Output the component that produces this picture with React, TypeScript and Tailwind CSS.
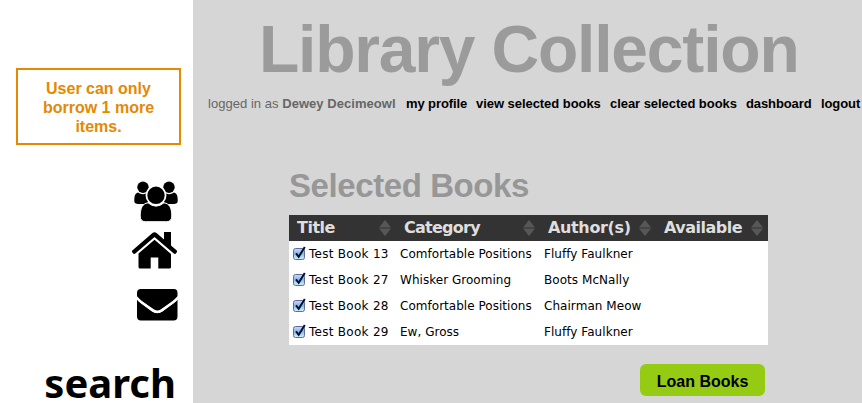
const sans = "font-['Liberation_Sans',Arial,sans-serif]";
const verdana = "font-['DejaVu_Sans',Verdana,sans-serif]";

const books = [
  { title: 'Test Book 13', category: 'Comfortable Positions', author: 'Fluffy Faulkner' },
  { title: 'Test Book 27', category: 'Whisker Grooming', author: 'Boots McNally' },
  { title: 'Test Book 28', category: 'Comfortable Positions', author: 'Chairman Meow' },
  { title: 'Test Book 29', category: 'Ew, Gross', author: 'Fluffy Faulkner' },
];

const columns = 'grid grid-cols-[107px_144px_116px_112px]';

function UsersIcon() {
  return (
    <svg className="block h-[41px] w-[44px]" viewBox="0 0 44 41">
      <circle cx="9" cy="6.2" r="5.7" />
      <circle cx="35" cy="6.2" r="5.7" />
      <path d="M4 11.5C1.5 12 .5 14 .3 18v2.5C.3 22 2 23 4 23h7l5-3-4-7.5Q8 14.5 4 11.5ZM40 11.5c2.500.5 3.500 2.500 3.700 6.500v2.500C43.700 22 42 23 40 23h-7l-5-3 4-7.500Q36 14.500 40 11.500Z" />
      <circle cx="22" cy="14.300" r="9.600" fill="#000" stroke="#fff" strokeWidth="1.800" />
      <path d="M14 21.800C8.500 22.500 6.300 27 6.200 35c0 3.800 2 5.700 5.300 5.700h21c3.300 0 5.300-1.900 5.300-5.700-.1-8-2.300-12.500-7.800-13.200Q22 28.500 14 21.800Z" stroke="#fff" strokeWidth="1" />
    </svg>
  );
}

function HomeIcon() {
  return (
    <svg className="block h-[37px] w-[46px]" viewBox="0 0 46 37">
      <path d="M20.200 1.200q2.300-2 4.600 0L32 7.500V0h7v13.500l5.500 4.700q1.200 1 .2 2.200l-.9 1q-.9 1-2 .1L22.500 5 3.300 21.500q-1.100.9-2-.1l-.9-1q-1-1.200.2-2.200Z" />
      <path d="M22.500 7.800 39 22v13q0 1.500-1.500 1.500H26.300V25.600h-7.600v10.900H8Q6.500 36.500 6.500 35V21.500Z" />
    </svg>
  );
}

function MailIcon() {
  return (
    <svg className="block h-[32px] w-[41px]" viewBox="0 0 41 32">
      <path d="M4 0h33q3.500 0 3.500 4v3q-1 2.500-4 4.700L24 20.500q-3.500 2.300-7 0L4 11.700Q1 9.500 0 7V4Q0 0 4 0Z" />
      <path d="M0 10.500q1 1.500 4 3.800L15 22.500q5.250 3.500 10.500 0L36.500 14.300q3-2.300 4-3.800v17q0 4-4 4H4q-4 0-4-4Z" />
      <path d="M0 9q2 2.500 4.500 4.200L16 21.500q4.250 2.800 8.500 0L36 13.200Q38.500 11.500 40.500 9" fill="none" stroke="#fff" strokeWidth="2.400" />
    </svg>
  );
}

function SortIcon() {
  return (
    <svg className="h-4 w-3" viewBox="0 0 12 16">
      <path d="M0 7.500 6 0l6 7.500ZM0 8.500 6 16l6-7.500Z" fill="#575757" />
    </svg>
  );
}

function HeaderCell({ label, spacing }: { label: string; spacing: string }) {
  return (
    <div className="flex items-center justify-between pr-[5px] pl-2">
      <span className={`leading-[26px] whitespace-nowrap ${spacing}`}>{label}</span>
      <SortIcon />
    </div>
  );
}

function CheckedBox() {
  return (
    <svg className="mb-[2px] block h-[15px] w-[14px] shrink-0" viewBox="0 0 14 15">
      <defs>
        <linearGradient id="box" x2="0" y2="1">
          <stop stopColor="#c6ddf7" />
          <stop offset=".45" stopColor="#83b7ec" />
          <stop offset="1" stopColor="#d1f3ff" />
        </linearGradient>
      </defs>
      <rect x=".5" y="2.500" width="11" height="11" rx="2" fill="url(#box)" stroke="#626b9c" />
      <path d="m3 7.300 2.700 3.500L11.800 1" fill="none" stroke="#070d27" strokeWidth="2" />
    </svg>
  );
}

export default function App() {
  return (
    <div className={`flex h-[403px] w-[862px] overflow-hidden bg-white text-black ${sans}`}>
      <aside className="flex w-[193px] shrink-0 flex-col pt-[68px]">
        <div className="ml-4 h-[77px] w-[165px] shrink-0 border-2 border-[#e48900] pt-[9px] text-center text-base leading-[19px] font-bold text-[#e48900]">
          <p>User can only</p>
          <p>borrow 1 more</p>
          <p>items.</p>
        </div>
        <nav className="mt-[36px] flex shrink-0 flex-col items-end pr-[15px]">
          <UsersIcon />
          <div className="mt-[10px]"><HomeIcon /></div>
          <div className="mt-[20px]"><MailIcon /></div>
        </nav>
        <h2 className="mt-[43px] shrink-0 pr-[17px] text-right font-['Noto_Sans','Open_Sans',sans-serif] text-[40px] leading-[38px] font-bold">search</h2>
      </aside>
      <main className="flex w-[669px] shrink-0 flex-col bg-[#d6d6d6]">
        <h1 className="mt-[12px] h-[74px] pl-[66px] text-[66px] leading-[74px] font-bold tracking-[-1.2px] whitespace-nowrap text-[#9b9b9b]">Library Collection</h1>
        <nav className="mt-[9px] flex h-[17px] gap-[10px] pl-[15px] text-[13px] leading-[17px] font-bold whitespace-nowrap">
          <span className="w-[188px] tracking-[0.04px] text-[#666]"><span className="font-normal">logged in as </span>Dewey Decimeowl</span>
          <a className="w-[60px] tracking-[-0.1px]">my profile</a>
          <a className="w-[124px] tracking-[-0.05px]">view selected books</a>
          <a className="w-[126px] tracking-[-0.05px]">clear selected books</a>
          <a className="w-[65px] tracking-[-0.1px]">dashboard</a>
          <a className="tracking-[-0.1px]">logout</a>
        </nav>
        <h2 className="mt-[54px] h-[40px] pl-[96px] text-[33px] leading-[40px] font-bold tracking-[-0.42px] whitespace-nowrap text-[#979797]">Selected Books</h2>
        <section className={`mt-[9px] ml-24 w-[479px] bg-white ${verdana}`}>
          <div className={`${columns} h-[26px] bg-[#333] text-base font-bold text-[#dedede]`}>
            <HeaderCell label="Title" spacing="tracking-[-0.5px]" />
            <HeaderCell label="Category" spacing="tracking-[-0.75px]" />
            <HeaderCell label="Author(s)" spacing="tracking-[-0.35px]" />
            <HeaderCell label="Available" spacing="tracking-[-0.5px]" />
          </div>
          {books.map((book) => (
            <div key={book.title} className={`${columns} h-[26px] text-[12px] leading-[26px] whitespace-nowrap`}>
              <div className="flex items-center pl-1"><CheckedBox /><span className="ml-[2px] tracking-[0.28px]">{book.title}</span></div>
              <div className="pl-1 tracking-[0.03px]">{book.category}</div>
              <div className="pl-1 tracking-[0.05px]">{book.author}</div>
            </div>
          ))}
        </section>
        <button className="mt-[19px] ml-[447px] h-[32px] w-[125px] rounded-[6px] bg-[#96cb13] pt-[3px] text-base font-bold">Loan Books</button>
      </main>
    </div>
  );
}
